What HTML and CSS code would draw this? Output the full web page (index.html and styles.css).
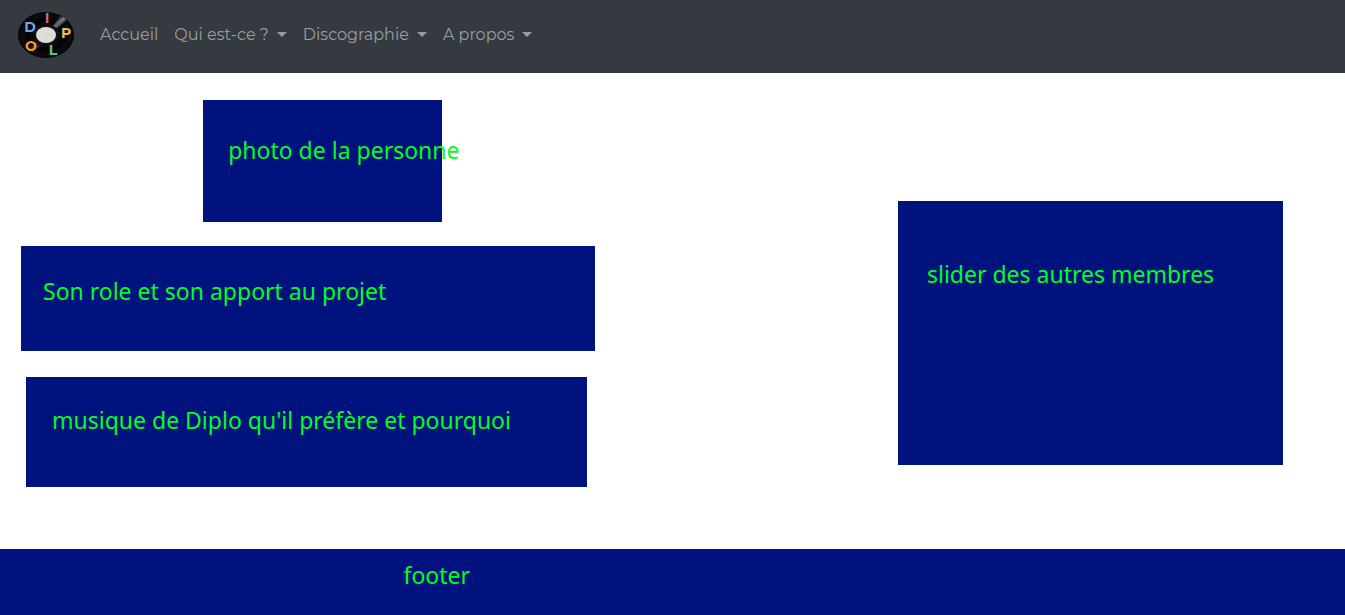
FILE: index.html
```html
<!DOCTYPE html>
<html lang="fr">
<head>
<meta charset="utf-8">
<meta name="viewport" content="width=device-width, initial-scale=1">
<title>Diplo</title>
<link rel="stylesheet" href="styles.css">
</head>
<body>
<header class="navbar">
  <a class="brand" href="#" aria-label="Diplo">
    <svg class="logo" viewBox="0 0 56 48" aria-hidden="true">
      <defs>
        <radialGradient id="vinyl"><stop offset="0.3" stop-color="#15161a"/><stop offset="0.65" stop-color="#020204"/><stop offset="0.85" stop-color="#0c0d10"/><stop offset="1" stop-color="#030304"/></radialGradient>
        <linearGradient id="shine" x1="0" y1="1" x2="1" y2="0"><stop offset="0" stop-color="#666873"/><stop offset="1" stop-color="#34363d"/></linearGradient>
      </defs>
      <ellipse cx="28" cy="24" rx="28" ry="23" fill="url(#vinyl)"/>
      <path d="M35 15 43 5 49 9 39 17Z" fill="url(#shine)"/>
      <path d="M37 15 45 6 48 8Z" fill="#777a85"/>
      <path d="M11 37 19 31 22 35 15 42Z" fill="#202126"/>
      <ellipse cx="28" cy="24" rx="10" ry="8" fill="#deded9"/>
      <circle cx="28" cy="23" r="1" fill="#c4c4c0"/>
      <g class="logo-text">
        <text x="29" y="12" fill="#d95f96">I</text>
        <text x="12" y="21" fill="#70a5e5">D</text>
        <text x="48" y="27" fill="#e6bd57">P</text>
        <text x="35" y="44" fill="#5fc968">L</text>
        <text x="13" y="40" fill="#fa9d2c">O</text>
      </g>
    </svg>
  </a>
  <nav class="nav" aria-label="Navigation principale">
    <a class="nav-link" href="#">Accueil</a>
    <button class="nav-link dropdown" type="button" aria-haspopup="true">Qui est-ce ?</button>
    <button class="nav-link dropdown" type="button" aria-haspopup="true">Discographie</button>
    <button class="nav-link dropdown" type="button" aria-haspopup="true">A propos</button>
  </nav>
</header>
<main class="content">
  <div class="profile">
    <section class="block photo">photo de la personne</section>
    <section class="block role">Son role et son apport au projet</section>
    <section class="block music">musique de Diplo qu'il préfère et pourquoi</section>
  </div>
  <aside class="block slider">slider des autres membres</aside>
</main>
<footer class="block footer">footer</footer>
</body>
</html>
```
FILE: styles.css
```css
* { box-sizing: border-box; }

body {
  display: flex;
  flex-direction: column;
  min-height: 100vh;
  margin: 0;
  background: #fff;
  font-family: "Noto Sans", sans-serif;
}

.navbar {
  display: flex;
  align-items: center;
  gap: 18px;
  min-height: 73px;
  padding: 8px 18px 12px;
  background: #343a40;
}

.brand { display: flex; }
.logo {
  width: 56px;
  height: 48px;
  overflow: visible;
}

.logo-text {
  font: bold 14px Montserrat, "Open Sans", sans-serif;
  text-anchor: middle;
}

.nav {
  display: flex;
  flex-wrap: wrap;
}

.nav-link {
  display: flex;
  align-items: center;
  gap: 8px;
  padding: 8px;
  border: 0;
  background: none;
  color: #9a9da0;
  font: 16px/24px Montserrat, "Noto Sans", sans-serif;
  text-decoration: none;
  cursor: pointer;
}

.dropdown::after {
  content: "";
  border: 5px solid transparent;
  border-top-color: currentColor;
  border-bottom: 0;
}

.content {
  display: grid;
  flex: 1;
  grid-template-columns: 574fr 385fr;
  column-gap: 24%;
  align-items: start;
  padding: 27px 62px 62px 21px;
}

.block {
  background: #00127e;
  color: #00ff21;
  font-size: 23px;
  line-height: 32px;
  white-space: nowrap;
}

.profile {
  display: flex;
  flex-direction: column;
}

.photo {
  align-self: center;
  width: 41.6%;
  min-height: 122px;
  margin-left: 29px;
  padding: 34px 25px;
}

.role {
  min-height: 105px;
  margin-top: 24px;
  padding: 29px 22px;
}

.music {
  min-height: 110px;
  margin: 26px 8px 0 5px;
  padding: 27px 26px;
}

.slider {
  min-height: 264px;
  margin-top: 101px;
  padding: 57px 29px;
}

.footer {
  min-height: 66px;
  padding: 10px 30%;
}
```
